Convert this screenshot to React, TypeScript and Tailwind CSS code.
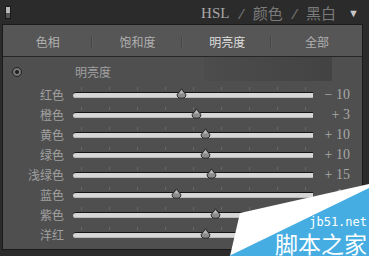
const tabs = ["色相", "饱和度", "明亮度", "全部"];

const rows = [
  { label: "红色", value: -10, text: "− 10" },
  { label: "橙色", value: 3, text: "+ 3" },
  { label: "黄色", value: 10, text: "+ 10" },
  { label: "绿色", value: 10, text: "+ 10" },
  { label: "浅绿色", value: 15, text: "+ 15" },
  { label: "蓝色", value: -14, text: "− 14" },
  { label: "紫色", value: 19, text: "" },
  { label: "洋红", value: 10, text: "" },
];

const ticks = [8, 36, 64, 92, 120, 148, 176, 204, 232];

const cjk = "font-['Noto_Sans_CJK_SC',sans-serif]";

function Thumb() {
  return (
    <svg width="11" height="11" viewBox="0 0 11 11" className="block">
      <path
        d="M5.5 0.8 L9.8 6.5 Q10.2 10.2 5.5 10.2 Q0.8 10.2 1.2 6.5 Z"
        fill="#8c8c8c"
        stroke="#262626"
        strokeWidth="1"
      />
      <path d="M5.5 2 L8 5.5 L3 5.5 Z" fill="#b4b4b4" />
    </svg>
  );
}

function SliderRow({ label, value, text }: { label: string; value: number; text: string }) {
  const pos = 120 + value * 1.2;
  return (
    <div className="flex h-[20px] items-center">
      <div className={`w-[61px] text-right text-[12px] leading-[20px] text-[#a0a0a0] ${cjk}`}>{label}</div>
      <div className="relative ml-[9px] h-[20px] w-[240px]">
        {ticks.map((t) => (
          <div key={t} className="absolute top-[2px] h-[3px] w-px bg-[#686868]" style={{ left: t }} />
        ))}
        <div className="absolute left-0 top-[7px] h-[6px] w-[240px] rounded-l-[3px] border-t border-[#151515] bg-[#d6d6d6] shadow-[inset_0_-1px_0_#b8b8b8]" />
        <div className="absolute top-[3px]" style={{ left: pos - 5.5 }}>
          <Thumb />
        </div>
      </div>
      <div className="w-[37px] text-right font-['Liberation_Serif',serif] text-[14px] leading-[20px] text-[#a8a8a8]">
        {text}
      </div>
    </div>
  );
}

export default function App() {
  return (
    <div className="relative h-[256px] w-[369px] overflow-hidden bg-[#2b2b2b]">
      <div className="relative flex h-[24px] items-center">
        <div className="ml-[5px] flex h-[13px] w-[6px] flex-col border border-[#1a1a1a]">
          <div className="h-[6px] bg-[#b8b8b8]" />
          <div className="flex-1 bg-[#555]" />
        </div>
        <div className="ml-auto mr-[10px] mt-[3px] flex items-center gap-[9px] text-[15px]">
          <span className="font-['Liberation_Serif',serif] text-[#a8a8a8]">HSL</span>
          <span className="text-[#6e6e6e] italic">/</span>
          <span className={`text-[#7a7a7a] ${cjk}`}>颜色</span>
          <span className="text-[#6e6e6e] italic">/</span>
          <span className={`text-[#7a7a7a] ${cjk}`}>黑白</span>
          <span className="ml-[3px] text-[11px] text-[#c8c8c8]">▼</span>
        </div>
      </div>

      <div className="ml-[2px] h-[226px] w-[361px] border border-[#1b1b1b] bg-[#4f4f4f]">
        <div className="grid h-[32px] grid-cols-4 border-b border-[#262626] bg-[#565656]">
          {tabs.map((t, i) => (
            <div key={t} className="relative flex items-center justify-center">
              <span className={`mt-[3px] text-[12px] ${i === 2 ? "text-[#dedede]" : "text-[#b0b0b0]"} ${cjk}`}>{t}</span>
              {i < 3 && (
                <div className="absolute right-0 top-[12px] flex h-[10px]">
                  <div className="w-px bg-[#454545]" />
                  <div className="w-px bg-[#5e5e5e]" />
                </div>
              )}
            </div>
          ))}
        </div>

        <div className="relative pt-[7px]">
          <div className="absolute left-[201px] top-0 h-[24px] w-[128px] bg-gradient-to-r from-[#4c4c4c] to-[#434343]" />
          <div className="relative flex h-[16px] items-center">
            <div className="ml-[9px] flex h-[10px] w-[10px] items-center justify-center rounded-full border border-[#202020] bg-[#777]">
              <div className="h-[4px] w-[4px] rounded-full bg-[#1e1e1e]" />
            </div>
            <span className={`ml-[53px] text-[12px] text-[#a0a0a0] ${cjk}`}>明亮度</span>
          </div>
          <div className="mt-[5px] flex flex-col">
            {rows.map((r) => (
              <SliderRow key={r.label} {...r} />
            ))}
          </div>
        </div>
      </div>

      <svg className="absolute left-0 top-0" width="369" height="256" viewBox="0 0 369 256">
        <polygon points="240,213 369,184 369,256 230,256" fill="#ffffff" />
        <polygon points="369,188 369,256 229,256" fill="#46ade2" />
      </svg>
      <div className="absolute right-[2px] top-[216px] font-['DejaVu_Sans_Mono',monospace] text-[12px] leading-[13px] text-white">
        jb51.net
      </div>
      <div className={`absolute right-[2px] top-[231px] text-[23px] leading-[24px] text-white ${cjk}`}>脚本之家</div>
    </div>
  );
}
